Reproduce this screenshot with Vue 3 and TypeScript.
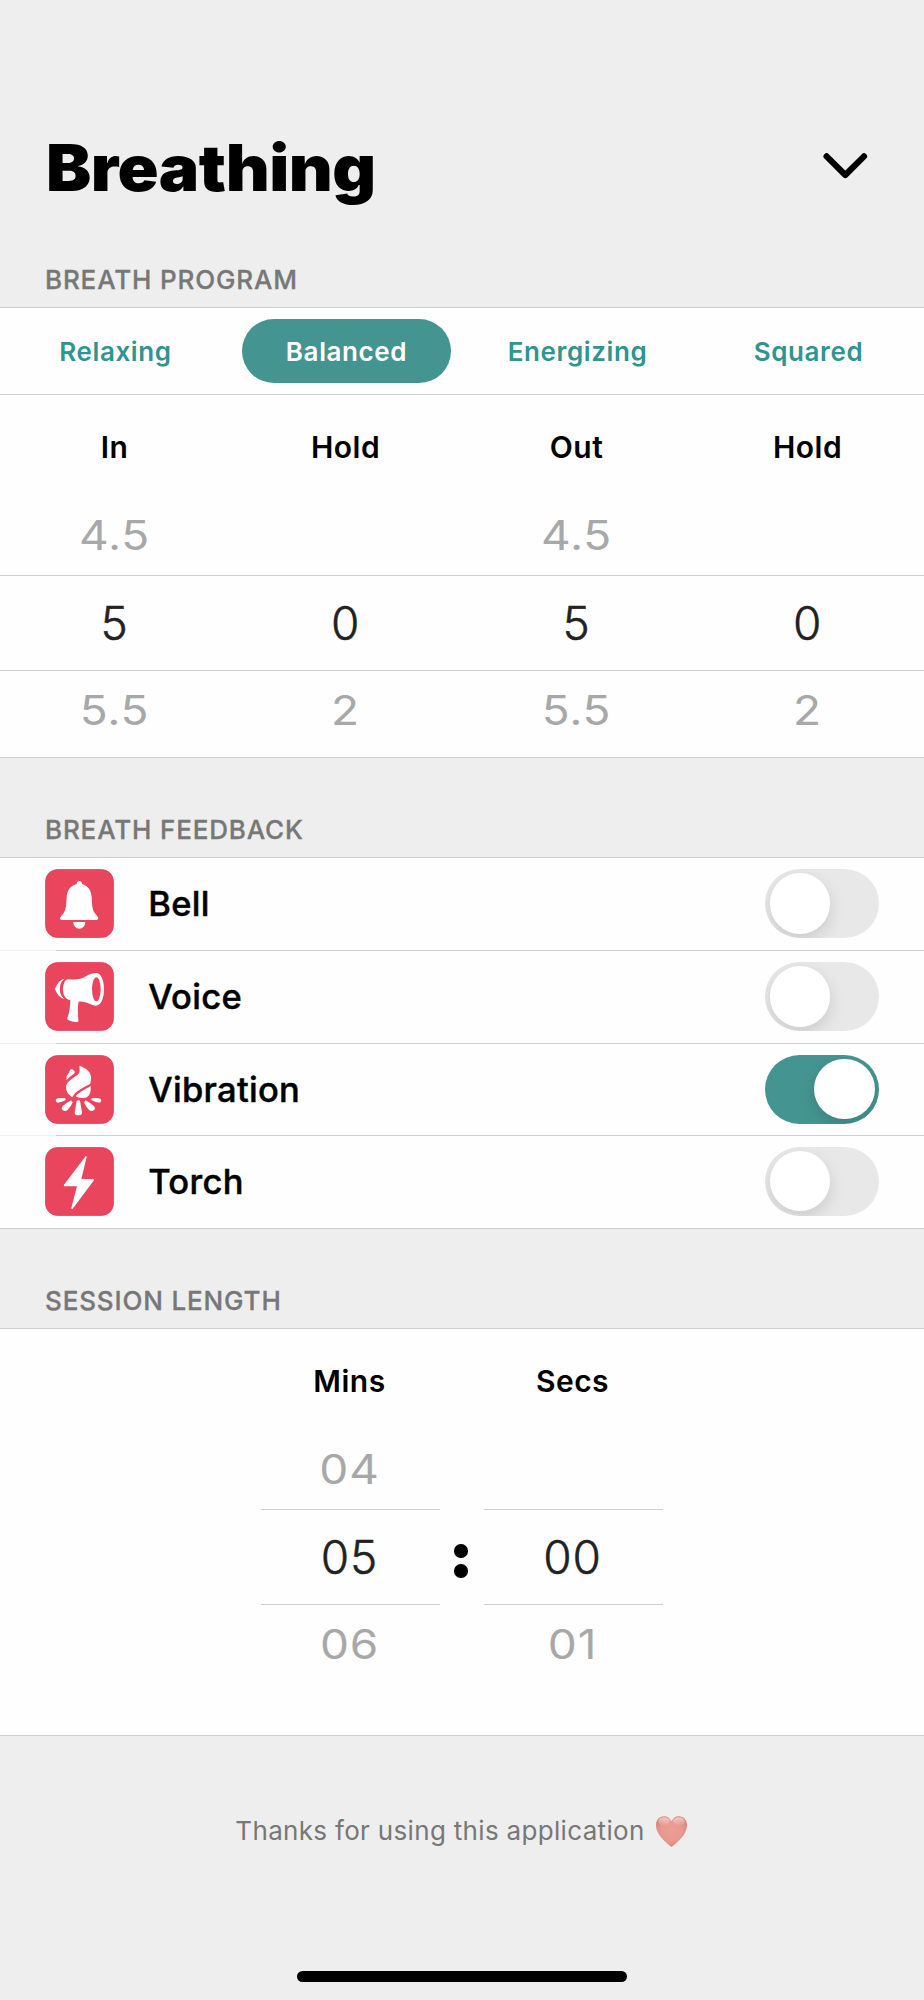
<script setup lang="ts">
import { ref } from 'vue'

interface Wheel {
  label: string
  prev: string
  value: string
  next: string
}

interface Feedback {
  name: string
  icon: 'bell' | 'voice' | 'vibration' | 'torch'
  on: boolean
}

const programs: string[] = ['Relaxing', 'Balanced', 'Energizing', 'Squared']
const selected = ref('Balanced')

const breathWheels: Wheel[] = [
  { label: 'In', prev: '4.5', value: '5', next: '5.5' },
  { label: 'Hold', prev: '', value: '0', next: '2' },
  { label: 'Out', prev: '4.5', value: '5', next: '5.5' },
  { label: 'Hold', prev: '', value: '0', next: '2' },
]

const sessionWheels: Wheel[] = [
  { label: 'Mins', prev: '04', value: '05', next: '06' },
  { label: 'Secs', prev: '', value: '00', next: '01' },
]

const feedback = ref<Feedback[]>([
  { name: 'Bell', icon: 'bell', on: false },
  { name: 'Voice', icon: 'voice', on: false },
  { name: 'Vibration', icon: 'vibration', on: true },
  { name: 'Torch', icon: 'torch', on: false },
])
</script>

<template>
  <main class="screen">
    <header class="top">
      <h1 class="title">Breathing</h1>
      <svg class="chevron" viewBox="0 0 46 28" aria-label="Close">
        <path d="M4.6 4.4 23.3 23 42 4.4" />
      </svg>
    </header>

    <h2 class="heading first">BREATH PROGRAM</h2>
    <section class="card">
      <nav class="tabs">
        <button
          v-for="p in programs"
          :key="p"
          type="button"
          :class="['tab', { active: p === selected }]"
          @click="selected = p"
        >{{ p }}</button>
      </nav>
      <div class="wheels">
        <div v-for="(w, i) in breathWheels" :key="i" class="wheel">
          <div class="wheel-label">{{ w.label }}</div>
          <div class="faded"><span>{{ w.prev }}</span></div>
          <div class="current"><span>{{ w.value }}</span></div>
          <div class="faded"><span>{{ w.next }}</span></div>
        </div>
      </div>
    </section>

    <h2 class="heading">BREATH FEEDBACK</h2>
    <section class="card">
      <div v-for="f in feedback" :key="f.name" :class="['row', f.icon]">
        <svg class="tile" viewBox="0 0 207 207">
          <rect class="tile-bg" x="1.5" y="1.5" width="204" height="204" rx="36" />
          <g v-if="f.icon === 'bell'">
            <path d="M103 36c5 0 8 4 8 9 17 5 28 18 29 40 1 24 2 37 9 47 6 8 11 12 11 16q0 5-6 5H51q-6 0-6-5c0-4 6-8 11-16 7-10 8-23 9-47 1-22 12-35 30-40 0-5 3-9 8-9z" />
            <path d="M85 159h36c0 12-8 20-18 20s-18-8-18-20z" />
          </g>
          <g v-else-if="f.icon === 'voice'">
            <path d="M70 52C93 54 108 53 123 43C134 36 144 33 153 33C169 33 177 56 177 82C177 109 168 131 153 131C138 131 123 116 101 119C98 130 98 148 100 175C101 181 96 181 91 180C83 179 77 177 70 174C67 173 66 171 67 168C74 151 75 136 76 115C62 112 54 100 54 84C54 66 60 52 70 52z" />
            <ellipse class="cut" cx="154" cy="82" rx="13" ry="36" />
            <path d="M59 50C43 52 38 65 29 81C37 94 40 107 58 110C49 103 45 94 45 80C45 67 50 57 59 50z" />
            <path class="arc" d="M60 50C50 60 46 70 46 80C46 92 50 102 59 110" />
          </g>
          <g v-else-if="f.icon === 'vibration'">
            <path d="M103 32C119 37 137 48 138 65C139 72 136 80 136 86C119 96 91 106 82 127C70 120 60 106 64 91C68 77 84 70 98 59C106 52 104 44 103 32z" />
            <path d="M137 93C122 102 101 112 92 124C99 130 112 129 121 128C133 125 139 112 137 93z" />
            <path d="M75 46Q77 41 82 43L89 49Q92 53 85 58Q72 66 65 76Q61 67 67 60Q72 54 75 46z" />
            <path d="M95 137q5-3 10 0l6 36q0 8-11 8t-11-8z" />
            <path d="M78 136 83 142Q79 154 67 166Q59 171 53 165Q47 160 54 152Q68 142 78 136z" />
            <path d="M122 136 117 142Q121 154 133 166Q141 171 147 165Q153 160 146 152Q132 142 122 136z" />
            <path d="M61 130 62 135Q51 142 38 143Q32 142 32 136Q33 130 40 130Q52 128 61 130z" />
            <path d="M140 130 139 135Q150 142 163 143Q169 142 169 136Q168 130 161 130Q149 128 140 130z" />
          </g>
          <path v-else d="M122 28 57 113Q55 118 59 118H96L79 183Q79 187 83 185L147 100Q147 96 144 96H109L125 30Q125 26 122 28z" />
        </svg>
        <span class="name">{{ f.name }}</span>
        <button
          type="button"
          role="switch"
          :aria-checked="f.on"
          :aria-label="f.name"
          :class="['toggle', { on: f.on }]"
          @click="f.on = !f.on"
        ><span class="knob"></span></button>
      </div>
    </section>

    <h2 class="heading">SESSION LENGTH</h2>
    <section class="card session">
      <template v-for="(w, i) in sessionWheels" :key="w.label">
        <div v-if="i > 0" class="colon"><i></i><i></i></div>
        <div class="wheel">
          <div class="wheel-label">{{ w.label }}</div>
          <div class="faded"><span>{{ w.prev }}</span></div>
          <div class="current"><span>{{ w.value }}</span></div>
          <div class="faded"><span>{{ w.next }}</span></div>
        </div>
      </template>
    </section>

    <footer class="footer">
      <p class="thanks">
        <span>Thanks for using this application</span>
        <svg class="heart" viewBox="0 0 31 31">
          <defs>
            <radialGradient id="heartFill" cx="0.5" cy="0.48" r="0.6">
              <stop offset="0" stop-color="#eb9f96" />
              <stop offset="0.6" stop-color="#e8978e" />
              <stop offset="1" stop-color="#d27f77" />
            </radialGradient>
            <linearGradient id="heartShine" x1="0" y1="0" x2="0" y2="1">
              <stop offset="0" stop-color="#fff" stop-opacity="0.55" />
              <stop offset="1" stop-color="#fff" stop-opacity="0" />
            </linearGradient>
          </defs>
          <path fill="url(#heartFill)" d="M15.5 31C10 26.5 0 19 0 9C0 4 3.5 .3 8 .3C11.5 .3 14 2.3 15.5 5.2C17 2.3 19.5 .3 23 .3C27.5 .3 31 4 31 9C31 19 21 26.5 15.5 31z" />
          <ellipse fill="url(#heartShine)" cx="8" cy="5.5" rx="5.8" ry="4.2" />
          <ellipse fill="url(#heartShine)" cx="23" cy="5.5" rx="5.8" ry="4.2" />
        </svg>
      </p>
      <div class="home-bar"></div>
    </footer>
  </main>
</template>

<style>
body {
  margin: 0;
  background: #eee;
}
</style>

<style scoped>
.screen {
  width: 924px;
  height: 2000px;
  display: flex;
  flex-direction: column;
  overflow: hidden;
  background: #eee;
  color: #000;
  font-family: Inter, Roboto, "Liberation Sans", sans-serif;
}
.screen * {
  box-sizing: border-box;
}
button {
  padding: 0;
  border: 0;
  background: none;
  font: inherit;
}
.top {
  height: 251px;
  flex: none;
  display: flex;
  justify-content: space-between;
  align-items: flex-start;
  padding: 128px 56px 0 46px;
}
.title {
  margin: 0;
  font-size: 64px;
  line-height: 80px;
  font-weight: 900;
  letter-spacing: -0.5px;
  transform: scaleX(1.06);
  transform-origin: left;
}
.chevron {
  width: 46px;
  height: 28px;
  margin-top: 24px;
}
.chevron path {
  fill: none;
  stroke: #000;
  stroke-width: 6.2;
  stroke-linecap: round;
  stroke-linejoin: round;
}
.heading {
  margin: 0;
  padding-left: 45px;
  flex: none;
  display: flex;
  align-items: flex-end;
  height: 99px;
  font-size: 26px;
  line-height: 54px;
  font-weight: 500;
  letter-spacing: 0.85px;
  -webkit-text-stroke: 0.3px #777;
  color: #777;
}
.heading.first {
  height: 56px;
}
.card {
  flex: none;
  background: #fefefe;
  border-top: 1px solid #cfcfcf;
  border-bottom: 1px solid #cfcfcf;
}
.tabs {
  height: 87px;
  display: grid;
  grid-template-columns: repeat(4, 1fr);
  justify-items: center;
  align-items: center;
  border-bottom: 1px solid #cfcfcf;
}
.tab {
  width: 209px;
  height: 64px;
  border-radius: 32px;
  font-size: 26px;
  line-height: 65px;
  font-weight: 600;
  letter-spacing: 0.6px;
  color: #309490;
}
.tab.active {
  background: #449591;
  color: #fff;
}
.wheels {
  display: grid;
  grid-template-columns: repeat(4, 1fr);
  padding-bottom: 7px;
}
.wheel {
  text-align: center;
}
.wheel-label {
  height: 101px;
  line-height: 105px;
  padding-right: 2px;
  font-size: 30px;
  font-weight: 600;
  letter-spacing: 0.5px;
}
.faded,
.current {
  padding-right: 2px;
  font-size: 46px;
  white-space: pre;
}
.faded {
  height: 79px;
  line-height: 79px;
  letter-spacing: 0.8px;
  color: #a8a8a8;
}
.faded span {
  display: inline-block;
  transform: scaleY(0.88);
}
.current {
  height: 96px;
  line-height: 94px;
  font-weight: 300;
  letter-spacing: 0.8px;
  -webkit-text-stroke: 0.5px #222;
  color: #222;
  border-top: 1px solid #cfcfcf;
  border-bottom: 1px solid #cfcfcf;
}
.row {
  height: 93px;
  display: flex;
  align-items: center;
  padding: 0 45px 2px;
  background: linear-gradient(to right, #f0f0f0 56px, #cfcfcf 56px) bottom / 100% 1px no-repeat;
}
.row.vibration {
  height: 92px;
}
.row.torch {
  background: none;
  height: 92px;
}
.tile {
  width: 69px;
  height: 69px;
  fill: #fff;
}
.tile-bg {
  fill: #e9465d;
  stroke: #e42f51;
  stroke-width: 2;
}
.cut {
  fill: #e9465d;
}
.arc {
  fill: none;
  stroke: #e9465d;
  stroke-width: 3;
}
.name {
  margin-left: 34.2px;
  flex: 1;
  font-size: 34.5px;
  font-weight: 500;
  letter-spacing: 0.3px;
  -webkit-text-stroke: 0.45px #000;
}
.toggle {
  width: 114px;
  height: 69px;
  padding: 0 4.5px;
  border-radius: 35px;
  background: #e8e8e8;
  overflow: hidden;
  display: flex;
  align-items: center;
}
.toggle.on {
  background: #449591;
  justify-content: flex-end;
}
.knob {
  width: 60.5px;
  height: 60.5px;
  border-radius: 50%;
  background: #fff;
  box-shadow: 0 6px 16px rgba(0, 0, 0, 0.13);
}
.session {
  height: 408px;
  display: flex;
  justify-content: center;
}
.session .wheel {
  width: 179px;
}
.colon {
  width: 44px;
  padding: 215px 2px 0 0;
  display: flex;
  flex-direction: column;
  align-items: center;
  gap: 6.5px;
}
.colon i {
  width: 13.5px;
  height: 13.5px;
  border-radius: 50%;
  background: #000;
}
.footer {
  flex: 1;
  display: flex;
  flex-direction: column;
  align-items: center;
  justify-content: space-between;
  padding: 75px 0 18px;
}
.thanks {
  margin: 0;
  padding-right: 2px;
  display: flex;
  align-items: center;
  gap: 11px;
  font-size: 26px;
  line-height: 40px;
  letter-spacing: 0.32px;
  color: #777;
}
.heart {
  width: 31px;
  height: 31px;
}
.home-bar {
  width: 330px;
  height: 11px;
  border-radius: 6px;
  background: #000;
}
</style>
